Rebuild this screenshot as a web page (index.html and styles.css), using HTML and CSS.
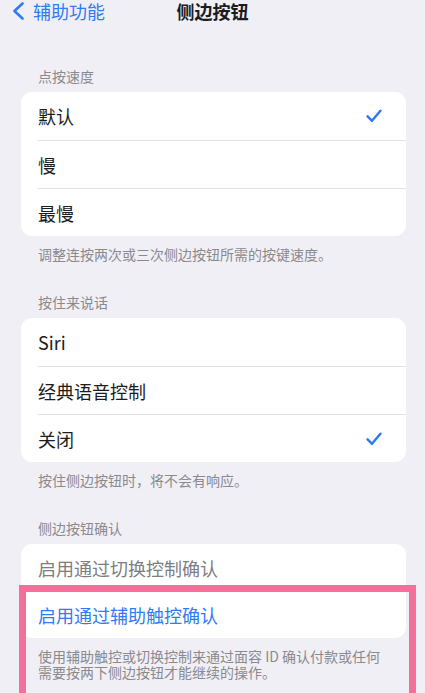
FILE: index.html
```html
<!DOCTYPE html>
<html lang="zh-CN">
<head>
    <meta charset="UTF-8">
    <meta name="viewport" content="width=device-width, initial-scale=1.0">
    <title>侧边按钮</title>
    <link rel="stylesheet" href="styles.css">
</head>
<body>
    <header class="nav">
        <a class="nav-back" href="#">
            <svg class="chevron" width="14" height="18" viewBox="0 0 14 18">
                <path d="M11.5 1.5 L3.5 9 L11.5 16.5" fill="none" stroke="#2f7bf5" stroke-width="2.6" stroke-linecap="round" stroke-linejoin="round"/>
            </svg>
            <span>辅助功能</span>
        </a>
        <h1 class="nav-title">侧边按钮</h1>
        <div></div>
    </header>

    <section class="group">
        <div class="group-header">点按速度</div>
        <ul class="list">
            <li class="row"><span>默认</span>
                <svg class="check" width="16" height="14" viewBox="0 0 16 14">
                    <path d="M1.6 7.4 L6 11.8 L14.4 1.8" fill="none" stroke="#2f7bf5" stroke-width="2.5" stroke-linecap="round" stroke-linejoin="round"/>
                </svg>
            </li>
            <li class="row"><span>慢</span></li>
            <li class="row"><span>最慢</span></li>
        </ul>
        <div class="group-footer">调整连按两次或三次侧边按钮所需的按键速度。</div>
    </section>

    <section class="group">
        <div class="group-header">按住来说话</div>
        <ul class="list">
            <li class="row"><span>Siri</span></li>
            <li class="row"><span>经典语音控制</span></li>
            <li class="row"><span>关闭</span>
                <svg class="check" width="16" height="14" viewBox="0 0 16 14">
                    <path d="M1.6 7.4 L6 11.8 L14.4 1.8" fill="none" stroke="#2f7bf5" stroke-width="2.5" stroke-linecap="round" stroke-linejoin="round"/>
                </svg>
            </li>
        </ul>
        <div class="group-footer">按住侧边按钮时，将不会有响应。</div>
    </section>

    <section class="group">
        <div class="group-header">侧边按钮确认</div>
        <ul class="list list-tight">
            <li class="row row-disabled"><span>启用通过切换控制确认</span></li>
            <li class="row row-link"><span>启用通过辅助触控确认</span></li>
        </ul>
        <div class="group-footer">使用辅助触控或切换控制来通过面容 ID 确认付款或任何需要按两下侧边按钮才能继续的操作。</div>
    </section>

    <div class="highlight"></div>
</body>
</html>
```

FILE: styles.css
```css
html, body {
    margin: 0;
    padding: 0;
}

body {
    position: relative;
    min-height: 693px;
    overflow: hidden;
    background: #f0eff5;
    font-family: "Noto Sans CJK SC", "Noto Sans", sans-serif;
    color: #1c1c1e;
}

/* top bar */
.nav {
    display: grid;
    grid-template-columns: 1fr auto 1fr;
    align-items: center;
    height: 22px;
    padding-top: 0;
}

.nav-back {
    display: flex;
    align-items: center;
    gap: 8px;
    padding-left: 11px;
    color: #2f7bf5;
    text-decoration: none;
    font-size: 18px;
    line-height: 22px;
}

.chevron {
    display: block;
}

.nav-title {
    margin: 0;
    font-size: 18px;
    line-height: 22px;
    font-weight: 700;
    color: #1c1c1e;
}

/* grouped lists */
.group {
    margin: 0 19px 0 21px;
}

.group:first-of-type {
    margin-top: 44px;
}

.group + .group {
    margin-top: 30px;
}

.group-header,
.group-footer {
    padding-left: 17px;
    padding-right: 16px;
    font-size: 14px;
    color: #8a8a8e;
}

.group-header {
    line-height: 20px;
    padding-bottom: 6px;
}

.group-footer {
    line-height: 16px;
    padding-top: 10px;
}

.list {
    list-style: none;
    margin: 0;
    padding: 0;
    background: #fff;
    border-radius: 11px;
    overflow: hidden;
}

.row {
    display: flex;
    align-items: center;
    justify-content: space-between;
    height: 48px;
    margin-left: 17px;
    padding-right: 24px;
    font-size: 18px;
    box-sizing: border-box;
}

.row + .row {
    border-top: 1px solid #e3e3e7;
}

.list-tight .row {
    height: 47px;
}

.row-disabled {
    color: #7d7d82;
}

.row-link {
    color: #2f7bf5;
}

.check {
    display: block;
}

/* pink frame drawn over the last option */
.highlight {
    position: absolute;
    left: 19px;
    top: 585px;
    width: 383px;
    height: 110px;
    border: 7px solid #f3709b;
    pointer-events: none;
}
```
